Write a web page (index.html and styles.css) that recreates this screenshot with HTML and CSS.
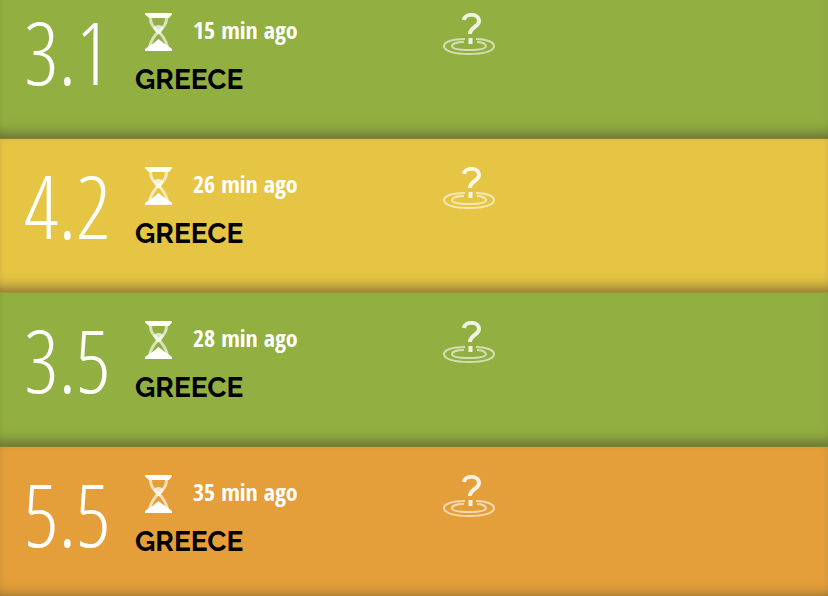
FILE: index.html
```html
<!DOCTYPE html>
<html lang="en">
<head>
    <meta charset="UTF-8">
    <meta name="viewport" content="width=device-width, initial-scale=1.0">
    <title>Latest Earthquakes</title>
    <link rel="stylesheet" href="styles.css">
</head>
<body>
    <svg class="sprite" aria-hidden="true">
        <symbol id="hourglass" viewBox="0 0 28 38">
            <path d="M0 0h27v1.500L24 5H4L0 1.500z" fill="#fff"/>
            <path d="M0 38h27v-2L22 32c-3-1-5-4-8.500-6-3 2-5 5-8 6l-5.500 4z" fill="#fff"/>
            <path d="M5.500 5C5.500 12 9 14 13 19 8 24 6 28 4.500 34M21.500 5C21.500 12 18 14 14 19 19 24 21 28 22.500 34" fill="none" stroke="#fff" stroke-opacity=".65" stroke-width="3"/>
            <path d="M8 15c3-4 8-4 11 0l-4 6h-3z" fill="#fff" fill-opacity=".7"/>
        </symbol>
        <symbol id="epicenter" viewBox="0 0 54 44">
            <g fill="none" stroke="#fff">
                <path d="M22 7c1-7 15-7 15 1 0 6-9 6-9 13" stroke-opacity=".85" stroke-width="4"/>
                <path d="M28.500 25v6" stroke-opacity=".85" stroke-width="4"/>
                <path d="M23 26C10 26 2 29 2 33c0 5 10 8 25 8s25-3 25-8c0-4-8-7-18-7" stroke-opacity=".6" stroke-width="2"/>
                <path d="M22 29c-8 0-12 2-12 4 0 3 6 4 17 4s17-1 17-4c0-2-4-4-9-4" stroke-opacity=".6" stroke-width="2"/>
            </g>
        </symbol>
    </svg>

    <ul class="quakes">
        <li class="quake minor">
            <span class="magnitude">3.1</span>
            <div class="details">
                <div class="time">
                    <svg class="hourglass"><use href="#hourglass"/></svg>
                    <span>15 min ago</span>
                </div>
                <div class="place">GREECE</div>
            </div>
            <svg class="epicenter"><use href="#epicenter"/></svg>
        </li>
        <li class="quake moderate">
            <span class="magnitude">4.2</span>
            <div class="details">
                <div class="time">
                    <svg class="hourglass"><use href="#hourglass"/></svg>
                    <span>26 min ago</span>
                </div>
                <div class="place">GREECE</div>
            </div>
            <svg class="epicenter"><use href="#epicenter"/></svg>
        </li>
        <li class="quake minor">
            <span class="magnitude">3.5</span>
            <div class="details">
                <div class="time">
                    <svg class="hourglass"><use href="#hourglass"/></svg>
                    <span>28 min ago</span>
                </div>
                <div class="place">GREECE</div>
            </div>
            <svg class="epicenter"><use href="#epicenter"/></svg>
        </li>
        <li class="quake strong">
            <span class="magnitude">5.5</span>
            <div class="details">
                <div class="time">
                    <svg class="hourglass"><use href="#hourglass"/></svg>
                    <span>35 min ago</span>
                </div>
                <div class="place">GREECE</div>
            </div>
            <svg class="epicenter"><use href="#epicenter"/></svg>
        </li>
    </ul>
</body>
</html>
```
FILE: styles.css
```css
body {
    margin: 0;
    overflow-x: hidden;
    font-family: "Open Sans Condensed", "Open Sans", sans-serif;
    color: #fff;
}
body::-webkit-scrollbar {
    display: none;
}
.sprite {
    display: none;
}
.quakes {
    list-style: none;
    margin: -15px 0 0;
    padding: 0;
}
.quake {
    display: flex;
    align-items: flex-start;
    box-sizing: border-box;
    min-height: 154px;
    padding: 28px 24px;
    border-bottom: 1px solid rgba(80, 70, 20, 0.4);
    box-shadow: inset 0 -14px 14px -10px rgba(80, 70, 50, 0.65), inset 0 0 4px rgba(100, 100, 0, 0.1);
}
.minor {
    background-color: #92b041;
}
.moderate {
    background-color: #e6c545;
}
.strong {
    background-color: #e49f3a;
}
.magnitude {
    flex: 0 0 111px;
    font-family: "Open Sans Condensed Light", "Open Sans Condensed", sans-serif;
    font-size: 86px;
    font-weight: 300;
    line-height: 78px;
}
.details {
    flex: 0 0 307px;
}
.time {
    display: flex;
    gap: 20px;
    padding-left: 10px;
    font-size: 24px;
    font-weight: 700;
    line-height: 34px;
}
.hourglass {
    width: 28px;
    height: 38px;
}
.place {
    margin-top: 10px;
    color: #000;
    font-family: Raleway, Lato, sans-serif;
    font-size: 28px;
    font-weight: 700;
    line-height: 38px;
}
.epicenter {
    width: 54px;
    height: 44px;
}
```
